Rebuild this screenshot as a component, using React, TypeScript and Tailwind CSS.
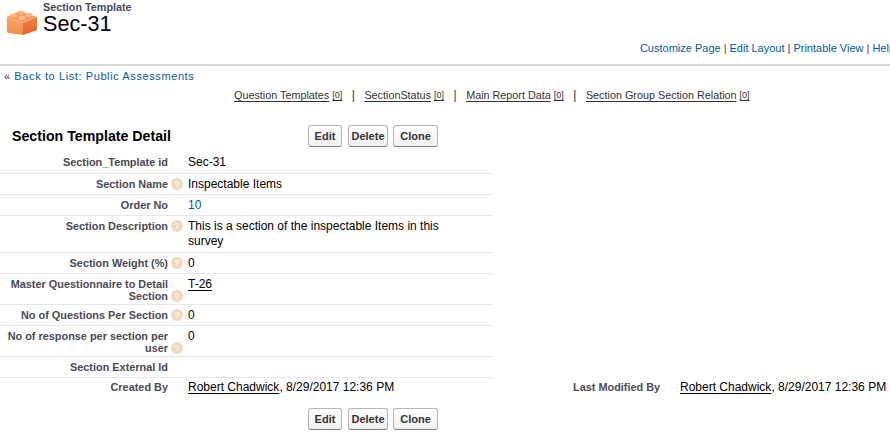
import React from 'react';

const RELATED = [
    { name: 'Question Templates', count: '[0]' },
    { name: 'SectionStatus', count: '[0]' },
    { name: 'Main Report Data', count: '[0]' },
    { name: 'Section Group Section Relation', count: '[0]' },
];

function BrickIcon() {
    return (
        <svg width="32" height="28" viewBox="6 9 32 28" className="block">
            <defs>
                <linearGradient id="brickLeft" x1="0" y1="0" x2="0" y2="1">
                    <stop offset="0" stopColor="#f9a768" />
                    <stop offset="1" stopColor="#f58c47" />
                </linearGradient>
                <linearGradient id="brickRight" x1="0" y1="0" x2="0" y2="1">
                    <stop offset="0" stopColor="#f0803f" />
                    <stop offset="1" stopColor="#e9622f" />
                </linearGradient>
            </defs>
            <path d="M7 17 L23 23 L23 35 L9 33 Q7 32.6 7 31 Z" fill="url(#brickLeft)" />
            <path d="M23 23 L37 17 L37 29 Q37 30 36 30.4 L23 35 Z" fill="url(#brickRight)" />
            <path d="M7 17 L20 11 L37 17 L23 23 Z" fill="#f79a5c" />
            <ellipse cx="13.5" cy="15.5" rx="3.4" ry="2" fill="#fcb583" />
            <ellipse cx="21" cy="12.5" rx="3.4" ry="2" fill="#fcb583" />
            <ellipse cx="22" cy="18" rx="3.4" ry="2" fill="#fdc093" />
            <ellipse cx="29" cy="15" rx="3.4" ry="2" fill="#fcb583" />
        </svg>
    );
}

function HelpDot() {
    return (
        <span className="absolute right-[-15px] bottom-[0px] flex h-[12px] w-[12px] items-center justify-center rounded-full bg-[#f0d9bd] text-[9px] leading-none font-bold text-[#fbf3e8]">
            ?
        </span>
    );
}

function Label({ text, help }: { text: string; help?: boolean }) {
    return (
        <div className="w-[168px] shrink-0 pl-[5px] text-right text-[10.9px] leading-[12px] font-bold text-[#4a4a56]">
            <span className="relative inline-block">
                {text}
                {help && <HelpDot />}
            </span>
        </div>
    );
}

function Row({ label, help, children, h, pt = 'pt-[4px]' }: { label: string; help?: boolean; children?: React.ReactNode; h: string; pt?: string }) {
    return (
        <div className={`flex w-[493px] border-b border-[#e8e8e8] ${pt} ${h}`}>
            <Label text={label} help={help} />
            <div className="mt-[-1px] ml-[20px] w-[270px] text-[12px] leading-[15px] text-black">{children}</div>
        </div>
    );
}

function Buttons() {
    return (
        <div className="flex gap-[6px]">
            {['Edit', 'Delete', 'Clone'].map((b) => (
                <button
                    key={b}
                    className={`h-[22px] rounded-[3px] border border-[#b5b5b5] border-b-[#7f7f7f] bg-gradient-to-b from-white to-[#f0f0f0] text-[11px] font-bold text-[#333] ${b === 'Edit' ? 'w-[34px]' : b === 'Delete' ? 'w-[40px]' : 'ml-[-1px] w-[45px]'}`}
                >
                    {b}
                </button>
            ))}
        </div>
    );
}

export default function App() {
    return (
        <div className="h-[434px] w-[890px] overflow-hidden bg-white font-['Liberation_Sans',Arial,sans-serif]">
            {/* page header */}
            <div className="h-[66px] border-b-2 border-[#d9d9d9]">
                <div className="flex h-[42px]">
                    <div className="mt-[9px] ml-[6px]">
                        <BrickIcon />
                    </div>
                    <div className="ml-[5px]">
                        <div className="text-[10.8px] leading-[14px] font-bold text-[#4a4a56]">Section Template</div>
                        <div className="text-[21.6px] leading-[20px] text-black">Sec-31</div>
                    </div>
                </div>
                <div className="flex justify-end overflow-hidden text-[11px] leading-[13px] whitespace-nowrap text-[#015ba7]">
                    <div className="mr-[-5px] flex shrink-0">
                        <span>Customize Page</span>
                        <span className="mx-[3px] text-[#8c2b2b]">|</span>
                        <span>Edit Layout</span>
                        <span className="mx-[3px] text-[#333]">|</span>
                        <span>Printable View</span>
                        <span className="mx-[3px] text-[#8c2b2b]">|</span>
                        <span>Help</span>
                    </div>
                </div>
            </div>

            <div className="mt-[3px] ml-[4px] text-[11px] leading-[14px] tracking-[0.6px] text-[#015ba7]">
                <span className="text-[#333]">«</span> Back to List: Public Assessments
            </div>

            {/* related list links */}
            <div className="mt-[5px] ml-[234px] flex h-[14px] items-center text-[10.8px] leading-[14px] whitespace-nowrap text-[#333]">
                {RELATED.map((r, i) => (
                    <React.Fragment key={r.name}>
                        {i > 0 && <span className="mx-[9.5px] text-[12px] text-[#333]">|</span>}
                        <span className="underline underline-offset-2">{r.name}</span>
                        <span className="ml-[3px] text-[9px] underline underline-offset-2">{r.count}</span>
                    </React.Fragment>
                ))}
            </div>

            {/* detail block */}
            <div className="mt-[19px] flex h-[30px] items-start">
                <div className="w-[308px] pt-[7px] pl-[12px] text-[14.2px] leading-[16px] font-bold text-black">Section Template Detail</div>
                <div className="pt-[4px]">
                    <Buttons />
                </div>
            </div>

            <Row label="Section_Template id" h="h-[23px]" pt="pt-[5px]">Sec-31</Row>
            <Row label="Section Name" help h="h-[21px]">Inspectable Items</Row>
            <Row label="Order No" h="h-[21px]"><span className="text-[#015ba7]">10</span></Row>
            <Row label="Section Description" help h="h-[37px]">This is a section of the inspectable Items in this survey</Row>
            <Row label="Section Weight (%)" help h="h-[21px]">0</Row>
            <Row label="Master Questionnaire to Detail Section" help h="h-[31px]"><span className="underline underline-offset-2">T-26</span></Row>
            <Row label="No of Questions Per Section" help h="h-[21px]">0</Row>
            <Row label="No of response per section per user" help h="h-[31px]">0</Row>
            <Row label="Section External Id" h="h-[21px]" />

            <div className="flex h-[21px] pt-[3px]">
                <Label text="Created By" />
                <div className="mt-[-1px] ml-[20px] w-[385px] text-[12px] leading-[15px] whitespace-nowrap text-black">
                    <span className="underline underline-offset-2">Robert Chadwick</span>, 8/29/2017 12:36 PM
                </div>
                <div className="w-[87px] text-right text-[10.9px] leading-[12px] font-bold whitespace-nowrap text-[#4a4a56]">Last Modified By</div>
                <div className="mt-[-1px] ml-[20px] text-[12px] leading-[15px] whitespace-nowrap text-black">
                    <span className="underline underline-offset-2">Robert Chadwick</span>, 8/29/2017 12:36 PM
                </div>
            </div>

            <div className="mt-[9px] ml-[308px]">
                <Buttons />
            </div>
        </div>
    );
}
